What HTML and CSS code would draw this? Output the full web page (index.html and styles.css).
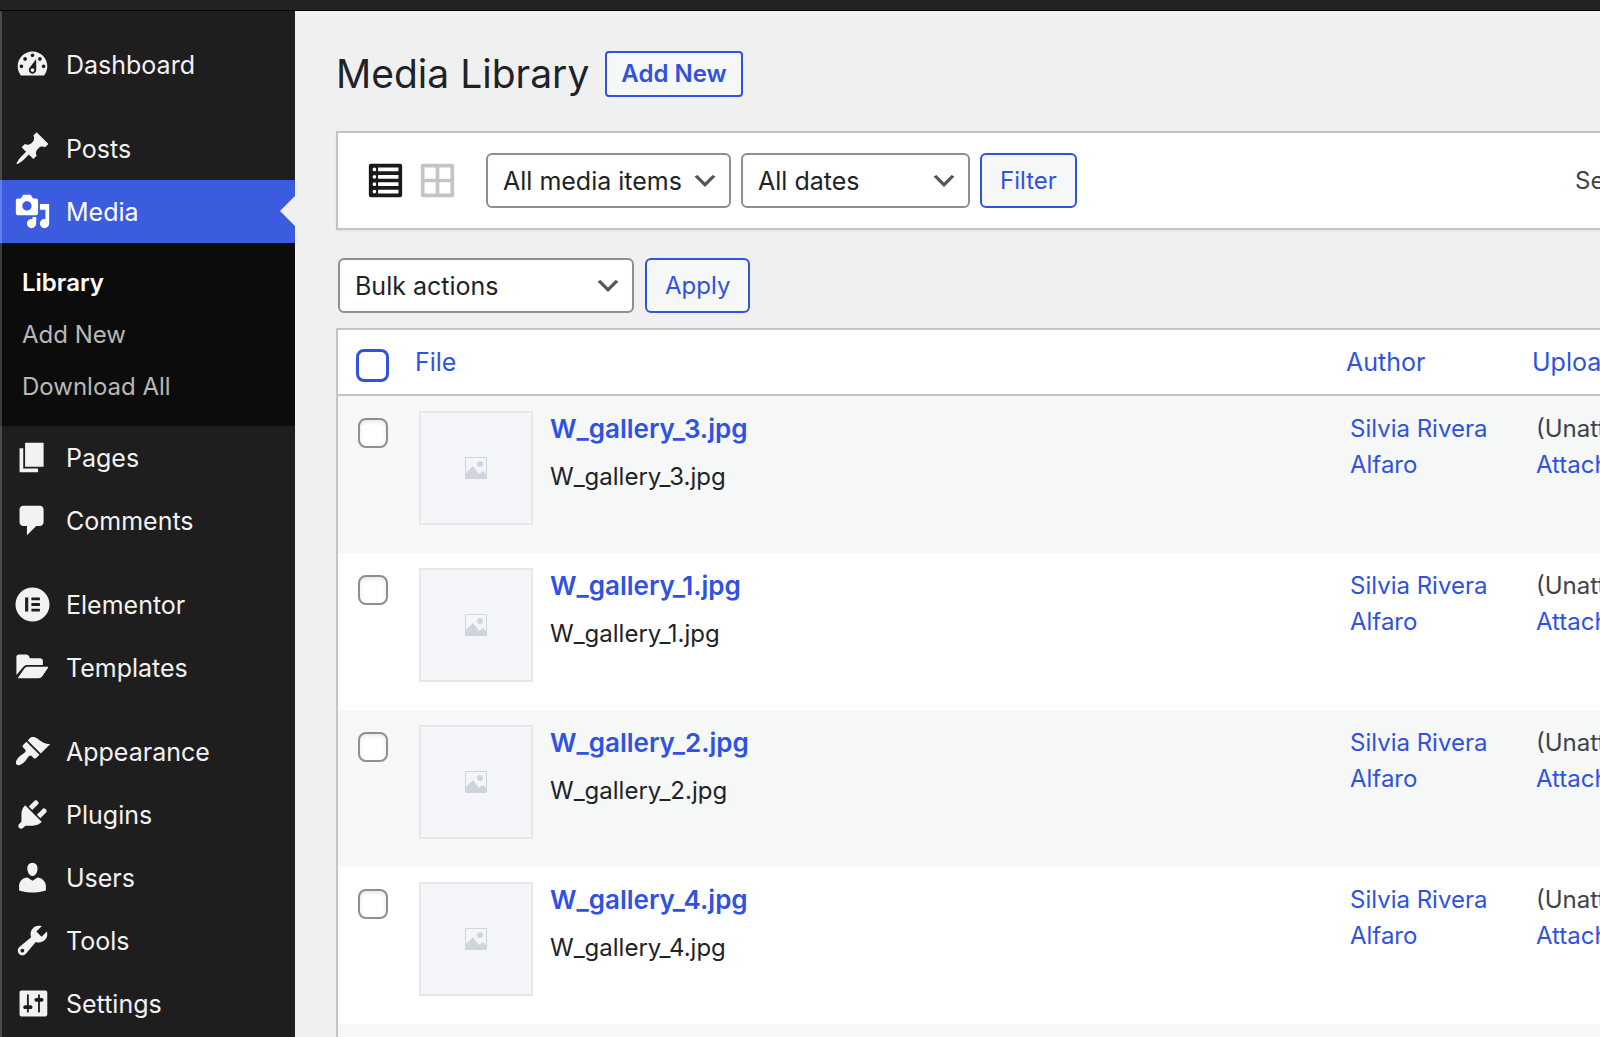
FILE: index.html
```
<!DOCTYPE html>
<html lang="en">
<head>
    <meta charset="UTF-8">
    <meta name="viewport" content="width=device-width, initial-scale=1.0">
    <title>Media Library</title>
    <link rel="stylesheet" href="styles.css">
</head>
<body>
    <div class="admin-bar"></div>

    <div class="layout">
        <nav class="sidebar">
            <ul class="menu">
                <li>
                    <a href="#" class="menu-item">
                        <svg class="icon" viewBox="0 0 20 20"><path fill-rule="evenodd" d="M3.76 16h12.48c1.1-1.37 1.76-3.11 1.76-5 0-4.42-3.58-8-8-8s-8 3.58-8 8c0 1.89.66 3.63 1.76 5zM10 4c.55 0 1 .45 1 1s-.45 1-1 1-1-.45-1-1 .45-1 1-1zM6 6c.55 0 1 .45 1 1s-.45 1-1 1-1-.45-1-1 .45-1 1-1zm8 0c.55 0 1 .45 1 1s-.45 1-1 1-1-.45-1-1 .45-1 1-1zm-5.37 5.55L12 7v6c0 1.1-.9 2-2 2s-2-.9-2-2c0-.57.24-1.08.63-1.45zM4 10c.55 0 1 .45 1 1s-.45 1-1 1-1-.45-1-1 .45-1 1-1zm12 0c.55 0 1 .45 1 1s-.45 1-1 1-1-.45-1-1 .45-1 1-1zm-5 3c0-.55-.45-1-1-1s-1 .45-1 1 .45 1 1 1 1-.45 1-1z"/></svg>
                        Dashboard
                    </a>
                </li>
                <li class="group-start">
                    <a href="#" class="menu-item">
                        <svg class="icon" viewBox="0 0 20 20"><path d="M10.44 3.02l1.82-1.82 6.36 6.35-1.83 1.82c-1.05-.68-2.48-.57-3.41.36l-.75.75c-.92.93-1.04 2.35-.35 3.41l-1.83 1.82-2.41-2.41-2.8 2.79c-.42.42-3.38 2.71-3.8 2.29s1.86-3.39 2.28-3.81l2.79-2.79L4.1 9.36l1.83-1.82c1.05.69 2.48.57 3.4-.36l.75-.75c.93-.92 1.05-2.35.36-3.41z"/></svg>
                        Posts
                    </a>
                </li>
                <li>
                    <a href="#" class="menu-item current">
                        <svg class="icon" viewBox="0 0 20 20"><path fill-rule="evenodd" d="M13 11V4c0-.55-.45-1-1-1h-1.67L9 1H5L3.67 3H2c-.55 0-1 .45-1 1v7c0 .55.45 1 1 1h10c.55 0 1-.45 1-1zM7 4.5c1.38 0 2.5 1.12 2.5 2.5S8.38 9.5 7 9.5 4.5 8.38 4.5 7 5.62 4.5 7 4.5zM14 6h5v10.5c0 1.38-1.12 2.5-2.5 2.5S14 17.88 14 16.5s1.12-2.5 2.5-2.5c.17 0 .34.02.5.05V9h-3V6zm-4 8.05V13h2v3.5c0 1.38-1.12 2.5-2.5 2.5S7 17.88 7 16.5 8.12 14 9.5 14c.17 0 .34.02.5.05z"/></svg>
                        Media
                    </a>
                    <ul class="submenu">
                        <li><a href="#" class="active">Library</a></li>
                        <li><a href="#">Add New</a></li>
                        <li><a href="#">Download All</a></li>
                    </ul>
                </li>
                <li>
                    <a href="#" class="menu-item">
                        <svg class="icon" viewBox="0 0 20 20"><path d="M6 15V2h10v13H6zm-1 1h8v2H3V5h2v11z"/></svg>
                        Pages
                    </a>
                </li>
                <li>
                    <a href="#" class="menu-item">
                        <svg class="icon" viewBox="0 0 20 20"><path d="M5 2h9c1.1 0 2 .9 2 2v7c0 1.1-.9 2-2 2h-2l-5 5v-5H5c-1.1 0-2-.9-2-2V4c0-1.1.9-2 2-2z"/></svg>
                        Comments
                    </a>
                </li>
                <li class="group-start">
                    <a href="#" class="menu-item">
                        <svg class="icon" viewBox="0 0 20 20"><path fill-rule="evenodd" d="M10 .8a9.2 9.2 0 1 0 0 18.4A9.2 9.2 0 0 0 10 .8zM6 6.2h1.7v7.6H6zM9.4 6.2H14v1.5H9.4zM9.4 9.2H14v1.6H9.4zM9.4 12.3H14v1.5H9.4z"/></svg>
                        Elementor
                    </a>
                </li>
                <li>
                    <a href="#" class="menu-item">
                        <svg class="icon" viewBox="0 0 20 20"><path d="M1.3 14V4.5Q1.3 3 2.8 3h3.7q1.3 0 1.7 1.1l.4.9H14q1.6 0 1.6 1.5v2.2H7q-1.2 0-1.9.9zM2 15.8l3.6-5.3q.6-.9 1.6-.9h11q.6 0 .2.6l-3.1 4.5q-.8 1.1-2 1.1z"/></svg>
                        Templates
                    </a>
                </li>
                <li class="group-start">
                    <a href="#" class="menu-item">
                        <svg class="icon" viewBox="0 0 20 20"><path d="M14.48 11.06L7.41 3.99l1.5-1.5c.5-.56 2.3-.47 3.51.32 1.21.8 1.43 1.28 2.91 2.1 1.18.64 2.45 1.26 4.45.85zm-.71.71L6.7 4.7 4.93 6.47c-.39.39-.39 1.02 0 1.41l1.06 1.06c.39.39.39 1.03 0 1.42-.6.6-1.43 1.11-2.21 1.69-.35.26-.7.53-1.01.84C1.43 14.23.4 16.08 1.4 17.07c.99 1 2.84-.03 4.18-1.36.31-.31.58-.66.85-1.02.57-.78 1.08-1.61 1.69-2.21.39-.39 1.02-.39 1.41 0l1.06 1.06c.39.39 1.02.39 1.41 0z"/></svg>
                        Appearance
                    </a>
                </li>
                <li>
                    <a href="#" class="menu-item">
                        <svg class="icon" viewBox="0 0 20 20"><path d="M13.11 4.36L9.87 7.6 8 5.73l3.24-3.24c.35-.34 1.05-.2 1.56.32.52.51.66 1.21.31 1.55zm-8 1.77l.91-1.12 9.01 9.01-1.19.84c-.71.71-2.63 1.16-3.82 1.16H6.14L4.9 17.26c-.59.59-1.54.59-2.12 0-.59-.58-.59-1.53 0-2.12l1.24-1.24v-3.88c0-1.13.4-3.19 1.09-3.89zm7.26 3.97l3.24-3.24c.34-.35 1.04-.21 1.55.31.52.51.66 1.21.31 1.55l-3.24 3.25z"/></svg>
                        Plugins
                    </a>
                </li>
                <li>
                    <a href="#" class="menu-item">
                        <svg class="icon" viewBox="0 0 20 20"><path d="M10 9.25c-2.27 0-2.73-3.44-2.73-3.44C7 4.02 7.82 2 9.97 2c2.16 0 2.98 2.02 2.71 3.81 0 0-.41 3.44-2.68 3.44zm0 2.57L12.72 10c2.39 0 4.52 2.33 4.52 4.53v2.49s-3.65 1.13-7.24 1.13c-3.65 0-7.24-1.13-7.24-1.13v-2.49c0-2.25 1.94-4.48 4.47-4.48z"/></svg>
                        Users
                    </a>
                </li>
                <li>
                    <a href="#" class="menu-item">
                        <svg class="icon" viewBox="0 0 20 20"><path fill-rule="evenodd" d="M16.68 9.77c-1.34 1.34-3.3 1.67-4.95.99l-5.41 6.52c-.99.99-2.59.99-3.58 0s-.99-2.59 0-3.57l6.52-5.42c-.68-1.65-.35-3.61.99-4.95 1.28-1.28 3.12-1.62 4.72-1.06l-2.89 2.89 2.82 2.82 2.86-2.87c.53 1.58.18 3.39-1.08 4.65zM3.81 16.21c.4.39 1.04.39 1.43 0 .4-.4.4-1.04 0-1.43-.39-.4-1.03-.4-1.43 0-.39.39-.39 1.03 0 1.43z"/></svg>
                        Tools
                    </a>
                </li>
                <li>
                    <a href="#" class="menu-item">
                        <svg class="icon" viewBox="0 0 20 20"><path fill-rule="evenodd" d="M18 16V4c0-.55-.45-1-1-1H4c-.55 0-1 .45-1 1v12c0 .55.45 1 1 1h13c.55 0 1-.45 1-1zM8 11h1c.55 0 1 .45 1 1s-.45 1-1 1H8v1.5c0 .28-.22.5-.5.5s-.5-.22-.5-.5V13H6c-.55 0-1-.45-1-1s.45-1 1-1h1V5.5c0-.28.22-.5.5-.5s.5.22.5.5V11zm5-2h-1c-.55 0-1-.45-1-1s.45-1 1-1h1V5.5c0-.28.22-.5.5-.5s.5.22.5.5V7h1c.55 0 1 .45 1 1s-.45 1-1 1h-1v5.5c0 .28-.22.5-.5.5s-.5-.22-.5-.5V9z"/></svg>
                        Settings
                    </a>
                </li>
            </ul>
        </nav>

        <main class="content">
            <div class="page-header">
                <h1>Media Library</h1>
                <a href="#" class="add-new">Add New</a>
            </div>

            <div class="toolbar">
                <a href="#" class="view-mode list" aria-label="List view">
                    <svg class="icon" viewBox="0 0 20 20"><path fill-rule="evenodd" d="M2 19h16c.55 0 1-.45 1-1V2c0-.55-.45-1-1-1H2c-.55 0-1 .45-1 1v16c0 .55.45 1 1 1zM4 3a1 1 0 1 1 0 2 1 1 0 0 1 0-2zm13 0v2H6V3zM4 7a1 1 0 1 1 0 2 1 1 0 0 1 0-2zm13 0v2H6V7zM4 11a1 1 0 1 1 0 2 1 1 0 0 1 0-2zm13 0v2H6v-2zM4 15a1 1 0 1 1 0 2 1 1 0 0 1 0-2zm13 0v2H6v-2z"/></svg>
                </a>
                <a href="#" class="view-mode grid" aria-label="Grid view">
                    <svg class="icon" viewBox="0 0 20 20"><path fill-rule="evenodd" d="M2 1h16c.55 0 1 .45 1 1v16c0 .55-.45 1-1 1H2c-.55 0-1-.45-1-1V2c0-.55.45-1 1-1zm7 8V3H3v6zm8 0V3h-6v6zm-8 8v-6H3v6zm8 0v-6h-6v6z"/></svg>
                </a>
                <div class="filters">
                    <select class="select-type" aria-label="Filter by type">
                        <option>All media items</option>
                    </select>
                    <select class="select-date" aria-label="Filter by date">
                        <option>All dates</option>
                    </select>
                    <button type="button" class="btn">Filter</button>
                </div>
                <div class="search">
                    <label for="media-search">Search</label>
                    <input type="search" id="media-search">
                </div>
            </div>

            <div class="bulk-actions">
                <select class="select-bulk" aria-label="Select bulk action">
                    <option>Bulk actions</option>
                </select>
                <button type="button" class="btn">Apply</button>
            </div>

            <table class="media-table">
                <thead>
                    <tr>
                        <th class="col-check"><input type="checkbox" class="check-all" aria-label="Select all"></th>
                        <th class="col-file"><a href="#">File</a></th>
                        <th class="col-author"><a href="#">Author</a></th>
                        <th class="col-uploaded"><a href="#">Uploaded to</a></th>
                    </tr>
                </thead>
                <tbody>
                    <tr>
                        <td><input type="checkbox" aria-label="Select W_gallery_3.jpg"></td>
                        <td>
                            <div class="file">
                                <div class="thumb"><svg viewBox="0 0 22 22"><path fill-rule="evenodd" d="M1 0h20a1 1 0 0 1 1 1v20a1 1 0 0 1-1 1H1a1 1 0 0 1-1-1V1a1 1 0 0 1 1-1zM1 1v15l7-7 6 8 4-3 3 3V1z"/><circle cx="15" cy="7" r="3"/></svg></div>
                                <div>
                                    <a href="#" class="file-title">W_gallery_3.jpg</a>
                                    <p class="file-name">W_gallery_3.jpg</p>
                                </div>
                            </div>
                        </td>
                        <td><a href="#">Silvia Rivera Alfaro</a></td>
                        <td class="uploaded">(Unattached)<br><a href="#">Attach</a></td>
                    </tr>
                    <tr>
                        <td><input type="checkbox" aria-label="Select W_gallery_1.jpg"></td>
                        <td>
                            <div class="file">
                                <div class="thumb"><svg viewBox="0 0 22 22"><path fill-rule="evenodd" d="M1 0h20a1 1 0 0 1 1 1v20a1 1 0 0 1-1 1H1a1 1 0 0 1-1-1V1a1 1 0 0 1 1-1zM1 1v15l7-7 6 8 4-3 3 3V1z"/><circle cx="15" cy="7" r="3"/></svg></div>
                                <div>
                                    <a href="#" class="file-title">W_gallery_1.jpg</a>
                                    <p class="file-name">W_gallery_1.jpg</p>
                                </div>
                            </div>
                        </td>
                        <td><a href="#">Silvia Rivera Alfaro</a></td>
                        <td class="uploaded">(Unattached)<br><a href="#">Attach</a></td>
                    </tr>
                    <tr>
                        <td><input type="checkbox" aria-label="Select W_gallery_2.jpg"></td>
                        <td>
                            <div class="file">
                                <div class="thumb"><svg viewBox="0 0 22 22"><path fill-rule="evenodd" d="M1 0h20a1 1 0 0 1 1 1v20a1 1 0 0 1-1 1H1a1 1 0 0 1-1-1V1a1 1 0 0 1 1-1zM1 1v15l7-7 6 8 4-3 3 3V1z"/><circle cx="15" cy="7" r="3"/></svg></div>
                                <div>
                                    <a href="#" class="file-title">W_gallery_2.jpg</a>
                                    <p class="file-name">W_gallery_2.jpg</p>
                                </div>
                            </div>
                        </td>
                        <td><a href="#">Silvia Rivera Alfaro</a></td>
                        <td class="uploaded">(Unattached)<br><a href="#">Attach</a></td>
                    </tr>
                    <tr>
                        <td><input type="checkbox" aria-label="Select W_gallery_4.jpg"></td>
                        <td>
                            <div class="file">
                                <div class="thumb"><svg viewBox="0 0 22 22"><path fill-rule="evenodd" d="M1 0h20a1 1 0 0 1 1 1v20a1 1 0 0 1-1 1H1a1 1 0 0 1-1-1V1a1 1 0 0 1 1-1zM1 1v15l7-7 6 8 4-3 3 3V1z"/><circle cx="15" cy="7" r="3"/></svg></div>
                                <div>
                                    <a href="#" class="file-title">W_gallery_4.jpg</a>
                                    <p class="file-name">W_gallery_4.jpg</p>
                                </div>
                            </div>
                        </td>
                        <td><a href="#">Silvia Rivera Alfaro</a></td>
                        <td class="uploaded">(Unattached)<br><a href="#">Attach</a></td>
                    </tr>
                    <tr>
                        <td colspan="4"></td>
                    </tr>
                </tbody>
            </table>
        </main>
    </div>
</body>
</html>
```
FILE: styles.css
```
* {
    margin: 0;
    padding: 0;
    box-sizing: border-box;
}

body {
    height: 100vh;
    display: flex;
    flex-direction: column;
    overflow: hidden;
    background-color: #f0f0f0;
    color: #1d2327;
    font-family: Inter, "Liberation Sans", sans-serif;
    font-size: 24px;
    line-height: 36px;
}

a {
    color: #2f52e0;
    text-decoration: none;
}

ul {
    list-style: none;
}

.admin-bar {
    flex: none;
    height: 11px;
    background-color: #222;
    border-bottom: 1px solid #000;
}

.layout {
    flex: 1;
    min-height: 0;
    display: flex;
}

.icon {
    display: block;
    width: 37px;
    height: 37px;
    fill: currentColor;
}

/* Sidebar */
.sidebar {
    position: relative;
    flex: none;
    width: 295px;
    padding-top: 22px;
    background-color: #1e1e1e;
}

.sidebar::before {
    content: "";
    position: absolute;
    top: 0;
    bottom: 0;
    left: 0;
    width: 2px;
    background-color: rgba(255, 255, 255, 0.2);
    z-index: 1;
}

.group-start {
    margin-top: 21px;
}

.menu-item {
    position: relative;
    display: flex;
    align-items: center;
    gap: 15px;
    height: 63px;
    padding-left: 14px;
    color: #f3f1f1;
    font-size: 25px;
}

.menu-item.current {
    background-color: #3c5ce0;
    color: #fff;
}

.menu-item.current::after {
    content: "";
    position: absolute;
    right: 0;
    top: 16px;
    border: 15px solid transparent;
    border-left: 0;
    border-right-color: #f0f0f0;
}

.submenu {
    padding: 14px 0 13px;
    background-color: #0c0c0c;
}

.submenu a {
    display: block;
    padding: 8px 22px;
    color: #b8b8b8;
}

.submenu a.active {
    color: #fff;
    font-weight: 600;
}

/* Content */
.content {
    flex: 1;
    min-width: 0;
    padding: 40px 0 0 41px;
    overflow: hidden;
}

.page-header {
    display: flex;
    align-items: center;
    gap: 16px;
    margin-bottom: 34px;
}

h1 {
    font-size: 39px;
    font-weight: 400;
    line-height: 46px;
}

.add-new {
    padding: 3px 14px;
    border: 2px solid #2f52e0;
    border-radius: 4px;
    background-color: #f6f7f7;
    font-weight: 600;
}

.toolbar {
    display: flex;
    align-items: center;
    padding: 20px 0 20px 29px;
    background-color: #fff;
    border: 2px solid #c3c4c7;
    border-right: 0;
    box-shadow: 0 1px 2px rgba(0, 0, 0, 0.06);
    overflow: hidden;
}

.view-mode.list {
    margin-right: 15px;
    color: #1a1a1a;
}

.view-mode.grid {
    margin-right: 30px;
    color: #c3c4c7;
}

.filters {
    display: flex;
    gap: 10px;
}

select,
.btn {
    height: 55px;
    border-radius: 6px;
    font-family: inherit;
}

select {
    appearance: none;
    padding: 0 15px;
    border: 2px solid #8c8f94;
    color: #1d2327;
    font-size: 25px;
    background: #fff url("data:image/svg+xml,%3Csvg xmlns='http://www.w3.org/2000/svg' viewBox='0 0 20 20'%3E%3Cpath d='M5 6l5 5 5-5 2 1-7 7-7-7 2-1z' fill='%23555'/%3E%3C/svg%3E") no-repeat right 9px center;
    background-size: 30px 30px;
}

.select-type {
    width: 245px;
}

.select-date {
    width: 229px;
}

.select-bulk {
    width: 296px;
}

.btn {
    padding: 0 18px;
    border: 2px solid #2f52e0;
    background-color: #f6f7f7;
    color: #2f52e0;
    font-size: 24px;
}

.search {
    display: flex;
    gap: 10px;
    width: 25px;
    margin-left: auto;
    color: #3c434a;
}

.bulk-actions {
    display: flex;
    gap: 11px;
    margin: 28px 0 15px;
    padding-left: 2px;
}

/* Media table */
.media-table {
    width: 100%;
    table-layout: fixed;
    border: 2px solid #c3c4c7;
    border-right: 0;
    border-spacing: 0;
    background-color: #fff;
}

th {
    height: 66px;
    border-bottom: 2px solid #c3c4c7;
    font-size: 25px;
    font-weight: 400;
    text-align: left;
    white-space: nowrap;
}

td {
    height: 157px;
    padding: 15px 4px;
    vertical-align: top;
}

tbody tr:nth-child(odd) {
    background-color: #f6f7f7;
}

.col-check {
    width: 77px;
}

.col-author {
    width: 186px;
}

.col-uploaded {
    width: 68px;
}

input[type="checkbox"] {
    appearance: none;
    display: block;
    width: 30px;
    height: 30px;
    margin: 7px 0 0 16px;
    border: 2px solid #8c8f94;
    border-radius: 8px;
    background-color: #fff;
    box-shadow: inset 0 2px 4px rgba(0, 0, 0, 0.1);
}

input[type="checkbox"].check-all {
    width: 33px;
    height: 33px;
    margin: 6px 0 0 18px;
    border: 3px solid #2f52e0;
    box-shadow: none;
}

.file {
    display: flex;
    gap: 17px;
}

.thumb {
    display: flex;
    align-items: center;
    justify-content: center;
    width: 114px;
    height: 114px;
    border: 2px solid #e6e8ea;
    background-color: #f3f5f9;
}

.thumb svg {
    width: 22px;
    fill: #cdd6dd;
}

.file-title {
    font-size: 26px;
    font-weight: 600;
}

.file-name {
    margin-top: 11px;
}

.uploaded {
    color: #3c434a;
    white-space: nowrap;
}
```
